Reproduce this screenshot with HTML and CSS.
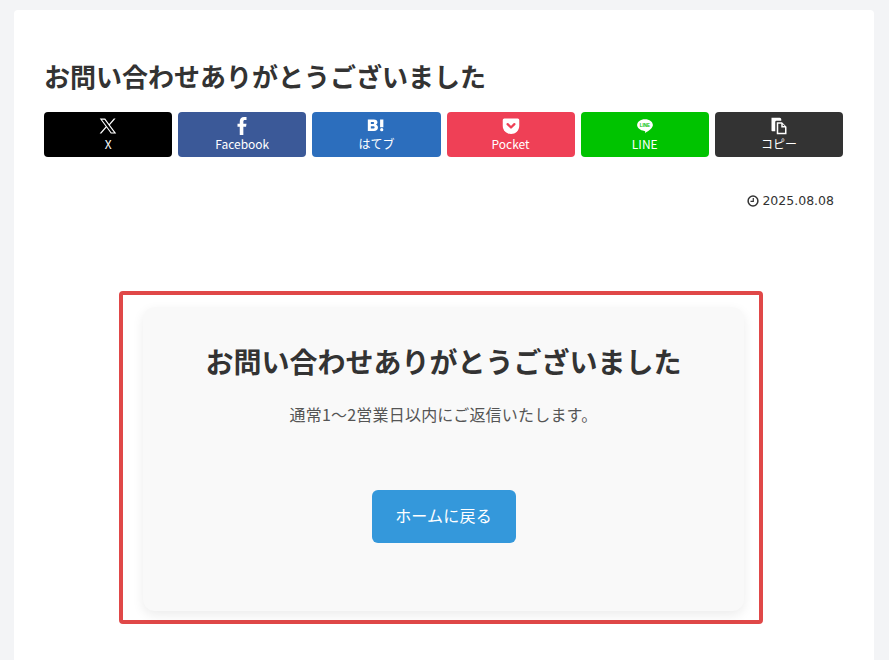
FILE: index.html
```html
<!DOCTYPE html>
<html lang="ja">
<head>
<meta charset="utf-8">
<title>お問い合わせありがとうございました</title>
<link rel="stylesheet" href="styles.css">
</head>
<body>
<main class="article">
  <h1 class="title">お問い合わせありがとうございました</h1>
  <div class="share">
    <a class="btn x"><svg class="ico" viewBox="0 0 24 24"><path fill="#fff" fill-rule="evenodd" d="M1 2h7.200l5.300 7.300L19.800 2h2.300l-7.600 8.700L23 22h-7.200l-5.800-7.900L3.100 22H.8l8.200-9.300zm3 1.500 12.600 17h3.400L7.400 3.500z"/></svg><span>X</span></a>
    <a class="btn fb"><svg class="ico" viewBox="0 0 24 24"><path fill="#fff" d="M9 24V13H6V9h3V6.200C9 2.500 11 0 14.800 0H18v4h-2c-1.600 0-2.200.8-2.200 2.300V9H18l-.6 4h-3.600v11z"/></svg><span>Facebook</span></a>
    <a class="btn hb"><svg class="ico" viewBox="0 1 22 22"><path fill="#fff" fill-rule="evenodd" d="M1 4h7.500c2.800 0 4.300 1.300 4.300 3.500 0 1.500-.8 2.600-2 3 1.600.4 2.600 1.600 2.600 3.400 0 2.600-1.800 4.100-4.800 4.100H1zm3.700 3v2.700h2.500c1 0 1.500-.5 1.500-1.400S8.200 7 7.200 7zm0 5.400V15h2.900c1.100 0 1.700-.5 1.700-1.300s-.6-1.300-1.700-1.300zM16 4h4v9.500h-4zm2 10.500a2 2 0 1 1 0 4 2 2 0 0 1 0-4z"/></svg><span>はてブ</span></a>
    <a class="btn pk"><svg class="ico" viewBox="0 0 24 24"><path fill="#fff" fill-rule="evenodd" d="M3 2h18a2 2 0 0 1 2 2v7.500C23 18 18 22.500 12 22.500S1 18 1 11.500V4a2 2 0 0 1 2-2z"/><path fill="none" stroke="#ef4056" stroke-width="3" stroke-linecap="round" stroke-linejoin="round" d="M7.500 9.500 12 14l4.500-4.500"/></svg><span>Pocket</span></a>
    <a class="btn ln"><svg class="ico" viewBox="0 0 24 24"><path fill="#fff" d="M12 3c6 0 10.500 3.400 10.500 7.800 0 3.800-5 7.500-10.500 10.700.6-2 .5-2.800-.8-3C5.500 18 1.500 14.800 1.500 10.800 1.500 6.400 6 3 12 3z"/><text class="ln-word" x="12" y="13" text-anchor="middle">LINE</text></svg><span>LINE</span></a>
    <a class="btn cp"><svg class="ico" viewBox="1 0 22 24"><path fill="#fff" d="M2 1h11a2 2 0 0 1 2 2v2H8.500A1.500 1.500 0 0 0 7 6.500V19H3a1 1 0 0 1-1-1z"/><path fill="#fff" fill-rule="evenodd" d="M9 7h7l6 6v10H9zm2 2v12h9v-7h-5V9zm6 .5V12h2.500z"/></svg><span>コピー</span></a>
  </div>
  <div class="meta"><svg class="clock" viewBox="0 0 12 12"><circle cx="6" cy="6" r="4.900" fill="none" stroke="#333" stroke-width="1.500"/><path d="M6.300 3v3.300H3.500" fill="none" stroke="#333" stroke-width="1.200"/></svg><span>2025.08.08</span></div>
  <section class="frame">
    <div class="card">
      <h2 class="card-title">お問い合わせありがとうございました</h2>
      <p class="card-text">通常1～2営業日以内にご返信いたします。</p>
      <a class="home">ホームに戻る</a>
    </div>
  </section>
</main>
</body>
</html>
```
FILE: styles.css
```css
* { box-sizing: border-box; }
html, body { margin: 0; height: 100%; }
body {
  background: #f3f4f6;
  font-family: "Noto Sans CJK JP", "Noto Sans", "Liberation Sans", sans-serif;
  color: #333;
  padding: 10px 15px 0 14px;
  overflow: hidden;
}
.article {
  background: #fff;
  border-radius: 4px 4px 0 0;
  height: 650px;
  padding: 46px 31px 0 30px;
}
.title {
  margin: 0;
  font-size: 26px;
  font-weight: 700;
  line-height: 40px;
  color: #333;
}
.share {
  display: grid;
  grid-template-columns: repeat(6, 1fr);
  gap: 6px;
  margin-top: 16px;
}
.btn {
  height: 45px;
  border-radius: 4px;
  color: #fff;
  display: flex;
  flex-direction: column;
  align-items: center;
  padding-top: 5px;
  font-size: 12px;
  line-height: 16px;
}
.btn span { margin-top: 1px; }
.ico { display: block; flex: none; width: 18px; height: 18px; }
.x { background: #000; }
.fb { background: #3b5998; }
.hb { background: #2c6ebd; }
.pk { background: #ef4056; }
.ln { background: #00c300; }
.cp { background: #333; }
.ln-word { font: 700 6px "Liberation Sans", sans-serif; fill: #00c300; }
.meta {
  display: flex;
  justify-content: flex-end;
  align-items: center;
  gap: 3px;
  margin-top: 35px;
  padding-right: 9px;
  font-family: "DejaVu Sans", "Noto Sans CJK JP", sans-serif;
  font-size: 12.500px;
  line-height: 18px;
  color: #333;
}
.clock { flex: none; width: 12px; height: 12px; }
.frame {
  width: 644px;
  height: 333px;
  margin: 81px 0 0 75px;
  border: 4px solid #e04848;
  border-radius: 4px;
  padding: 12px 15px 9px 20px;
}
.card {
  height: 304px;
  background: #f9f9f9;
  border-radius: 12px;
  box-shadow: 0 4px 12px rgba(0, 0, 0, 0.08);
  text-align: center;
  padding-top: 34px;
}
.card-title {
  margin: 0;
  font-size: 28px;
  font-weight: 700;
  line-height: 40px;
  color: #333;
}
.card-text {
  margin: 20px 0 0;
  font-size: 16px;
  line-height: 26px;
  letter-spacing: 0.200px;
  color: #555;
}
.home {
  display: block;
  width: 144px;
  height: 53px;
  margin: 63px auto 0;
  background: #3498db;
  border-radius: 6px;
  color: #fff;
  font-size: 16px;
  line-height: 50px;
  letter-spacing: 0.200px;
}
```
